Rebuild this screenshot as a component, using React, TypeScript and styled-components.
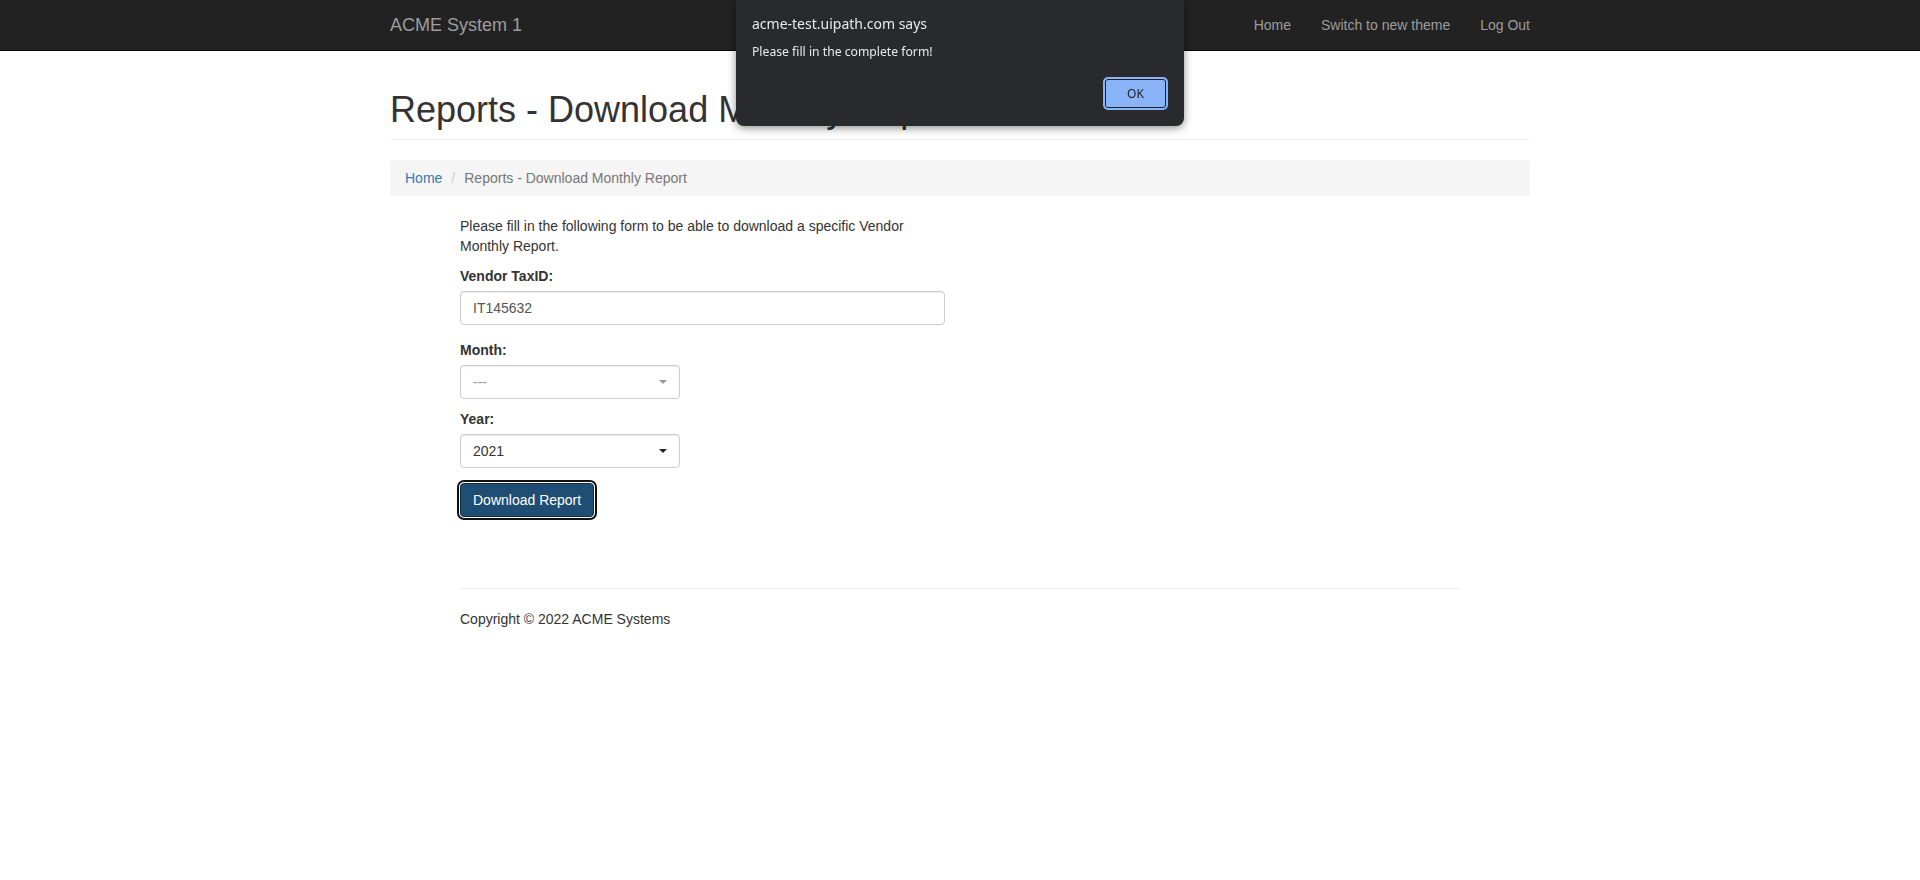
import React from 'react';
import styled, { createGlobalStyle } from 'styled-components';

const GlobalStyle = createGlobalStyle`
  html, body {
    margin: 0;
    padding: 0;
    background: #fff;
  }

  body {
    font-family: 'Liberation Sans', Arial, sans-serif;
    font-size: 14px;
    line-height: 20px;
    color: #333;
  }

  * {
    box-sizing: border-box;
  }
`;

// Top navigation
const Navbar = styled.nav`
  background: #222;
  border-bottom: 1px solid #080808;
  height: 51px;
`;

const NavInner = styled.div`
  width: 1140px;
  margin: 0 auto;
  display: flex;
  justify-content: space-between;
  align-items: center;
`;

const Brand = styled.a`
  font-size: 18px;
  line-height: 20px;
  padding: 15px 0;
  color: #9d9d9d;
  text-decoration: none;
`;

const NavList = styled.ul`
  display: flex;
  list-style: none;
  margin: 0 -15px 0 0;
  padding: 0;
`;

const NavLink = styled.a`
  display: block;
  padding: 15px;
  line-height: 20px;
  color: #9d9d9d;
  text-decoration: none;
`;

// Page body
const Container = styled.main`
  width: 1140px;
  margin: 0 auto;
`;

const PageHeader = styled.h1`
  margin: 39px 0 20px;
  padding-bottom: 9px;
  border-bottom: 1px solid #eee;
  font-size: 36px;
  font-weight: 500;
  line-height: 1.1;
  color: #333;
`;

const Breadcrumb = styled.ol`
  display: flex;
  list-style: none;
  margin: 0 0 20px;
  padding: 8px 15px;
  background: #f5f5f5;
  border-radius: 4px;
`;

const Crumb = styled.li<{ $active?: boolean }>`
  color: ${(p) => (p.$active ? '#777' : '#337ab7')};
`;

const CrumbSep = styled.li`
  color: #ccc;
  padding: 0 9px;
`;

const Content = styled.section`
  width: 1000px;
  margin: 0 auto;
`;

const FormCol = styled.form`
  width: 485px;
`;

const Intro = styled.p`
  margin: 0 0 10px;
`;

const FormGroup = styled.div<{ $gap?: number }>`
  margin-bottom: ${(p) => p.$gap ?? 15}px;
`;

const Label = styled.label`
  display: block;
  font-weight: 700;
  margin-bottom: 5px;
`;

const TextInput = styled.input`
  display: block;
  width: 100%;
  height: 34px;
  padding: 6px 12px;
  font: inherit;
  color: #555;
  background: #fff;
  border: 1px solid #ccc;
  border-radius: 4px;
  box-shadow: inset 0 1px 1px rgba(0, 0, 0, 0.075);
  outline: none;
`;

const SelectWrap = styled.div`
  position: relative;
  width: 220px;
`;

const Select = styled.select<{ $muted?: boolean }>`
  display: block;
  width: 100%;
  height: 34px;
  padding: 6px 12px;
  font: inherit;
  color: ${(p) => (p.$muted ? '#999' : '#333')};
  background: #fff;
  border: 1px solid #ccc;
  border-radius: 4px;
  box-shadow: inset 0 1px 1px rgba(0, 0, 0, 0.075);
  appearance: none;
  outline: none;
`;

const Caret = styled.span<{ $muted?: boolean }>`
  position: absolute;
  right: 13px;
  top: 15px;
  width: 0;
  height: 0;
  border-left: 4px solid transparent;
  border-right: 4px solid transparent;
  border-top: 4px solid ${(p) => (p.$muted ? '#999' : '#222')};
  pointer-events: none;
`;

const PrimaryButton = styled.button`
  height: 34px;
  padding: 6px 12px;
  font: inherit;
  color: #fff;
  background: #204d74;
  border: 1px solid #122b40;
  border-radius: 4px;
  box-shadow: 0 0 0 1px #fff, 0 0 0 3px #111;
  cursor: pointer;
`;

const Footer = styled.footer`
  margin-top: 71px;
`;

const Rule = styled.hr`
  margin: 0 0 20px;
  border: 0;
  border-top: 1px solid #eee;
`;

const Copyright = styled.p`
  margin: 0;
`;

// Browser alert overlay
const AlertBox = styled.div`
  position: fixed;
  top: 0;
  left: 50%;
  width: 448px;
  margin-left: -224px;
  padding: 14px 16px 16px;
  background: #292a2d;
  border-radius: 0 0 8px 8px;
  box-shadow: 0 2px 8px rgba(0, 0, 0, 0.45);
  font-family: 'Noto Sans', 'Open Sans', sans-serif;
  color: #e8eaed;
  display: flex;
  flex-direction: column;
`;

const AlertTitle = styled.div`
  font-size: 14px;
  line-height: 20px;
`;

const AlertMessage = styled.div`
  margin-top: 8px;
  font-size: 12.2px;
  line-height: 20px;
`;

const AlertActions = styled.div`
  display: flex;
  justify-content: flex-end;
  margin-top: 15px;
`;

const AlertButton = styled.button`
  width: 65px;
  height: 33px;
  font-family: 'Noto Sans', 'Open Sans', sans-serif;
  font-size: 12px;
  color: #202124;
  background: #8ab4f8;
  border: 2px solid #8ab4f8;
  border-radius: 5px;
  box-shadow: inset 0 0 0 1px #202124;
`;

const App: React.FC = () => {
  return (
    <>
      <GlobalStyle />
      <Navbar>
        <NavInner>
          <Brand href='#'>ACME System 1</Brand>
          <NavList>
            <li>
              <NavLink href='#'>Home</NavLink>
            </li>
            <li>
              <NavLink href='#'>Switch to new theme</NavLink>
            </li>
            <li>
              <NavLink href='#'>Log Out</NavLink>
            </li>
          </NavList>
        </NavInner>
      </Navbar>

      <Container>
        <PageHeader>Reports - Download Monthly Report</PageHeader>
        <Breadcrumb>
          <Crumb>Home</Crumb>
          <CrumbSep aria-hidden='true'>/</CrumbSep>
          <Crumb $active>Reports - Download Monthly Report</Crumb>
        </Breadcrumb>

        <Content>
          <FormCol onSubmit={(e) => e.preventDefault()}>
            <Intro>Please fill in the following form to be able to download a specific Vendor Monthly Report.</Intro>
            <FormGroup>
              <Label>Vendor TaxID:</Label>
              <TextInput defaultValue='IT145632' />
            </FormGroup>
            <FormGroup $gap={10}>
              <Label>Month:</Label>
              <SelectWrap>
                <Select $muted defaultValue=''>
                  <option value=''>---</option>
                </Select>
                <Caret $muted />
              </SelectWrap>
            </FormGroup>
            <FormGroup>
              <Label>Year:</Label>
              <SelectWrap>
                <Select defaultValue='2021'>
                  <option value='2021'>2021</option>
                </Select>
                <Caret />
              </SelectWrap>
            </FormGroup>
            <PrimaryButton type='submit'>Download Report</PrimaryButton>
          </FormCol>

          <Footer>
            <Rule />
            <Copyright>Copyright © 2022 ACME Systems</Copyright>
          </Footer>
        </Content>
      </Container>

      <AlertBox role='alertdialog'>
        <AlertTitle>acme-test.uipath.com says</AlertTitle>
        <AlertMessage>Please fill in the complete form!</AlertMessage>
        <AlertActions>
          <AlertButton>OK</AlertButton>
        </AlertActions>
      </AlertBox>
    </>
  );
};

export default App;
